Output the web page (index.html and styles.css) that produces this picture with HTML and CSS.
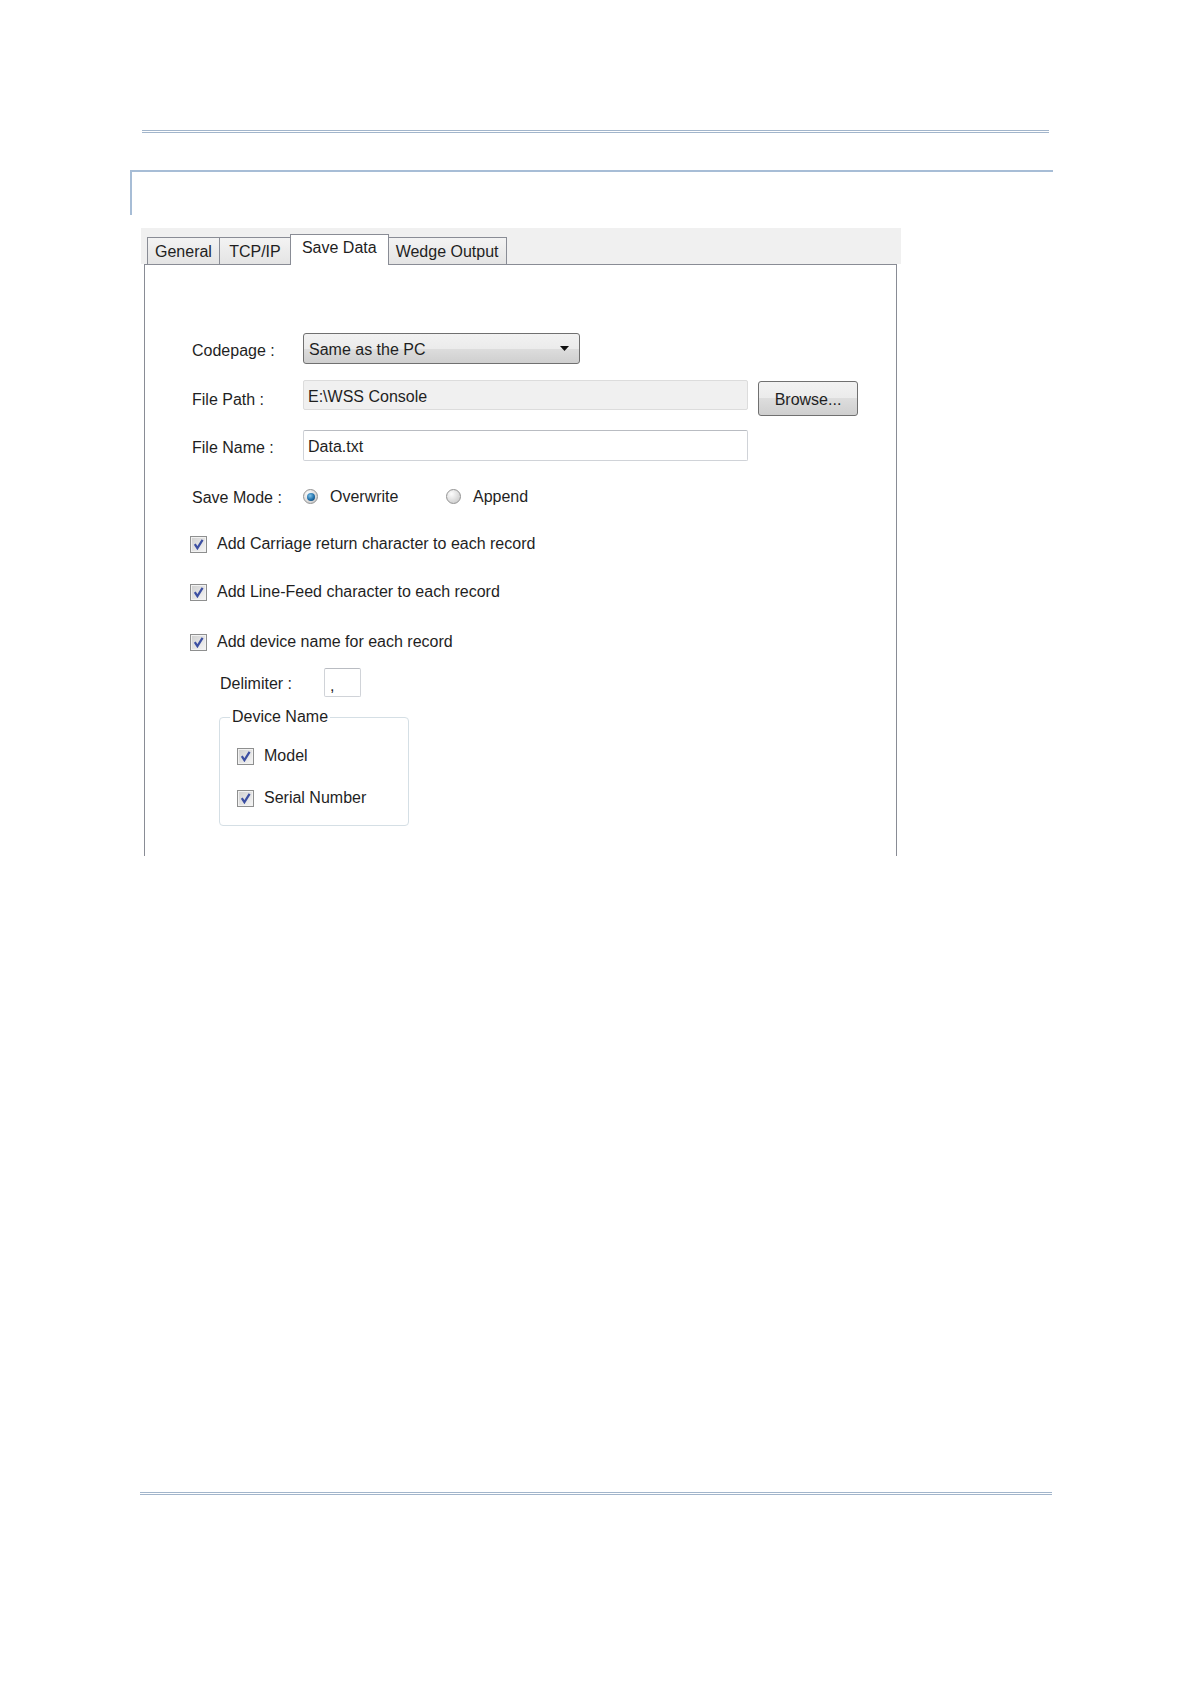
FILE: index.html
```html
<!DOCTYPE html>
<html>
    <head>
        <title>Save Data settings</title>
        <link rel="stylesheet" href="styles.css">
    </head>
    <body>
        <div class="rule rule-top"></div>
        <div class="heading-box"></div>

        <div class="shot">
            <div class="tabbar">
                <div class="tab">General</div>
                <div class="tab">TCP/IP</div>
                <div class="tab tab-active">Save Data</div>
                <div class="tab">Wedge Output</div>
            </div>
            <div class="panel">
                <div class="row row-codepage">
                    <span class="label">Codepage :</span>
                    <div class="select">
                        <span class="select-text">Same as the PC</span>
                        <svg class="arrow" width="9" height="5" viewBox="0 0 9 5"><path d="M0 0 H9 L4.5 5 Z" fill="#111"/></svg>
                    </div>
                </div>
                <div class="row row-path">
                    <span class="label label-tall">File Path :</span>
                    <div class="field field-disabled">E:\WSS Console</div>
                    <div class="button">Browse...</div>
                </div>
                <div class="row row-name">
                    <span class="label">File Name :</span>
                    <div class="field">Data.txt</div>
                </div>
                <div class="row row-mode">
                    <span class="label label-mode">Save Mode :</span>
                    <span class="option"><span class="radio radio-on"><span class="dot"></span></span>Overwrite</span>
                    <span class="option"><span class="radio"></span>Append</span>
                </div>
                <div class="row row-check">
                    <span class="box"><svg width="11" height="11" viewBox="0 0 11 11"><path d="M1.8 5.2 L4.4 9.2 L9.6 0.8" fill="none" stroke="#3c4fa2" stroke-width="2.2"/></svg></span>
                    Add Carriage return character to each record
                </div>
                <div class="row row-check">
                    <span class="box"><svg width="11" height="11" viewBox="0 0 11 11"><path d="M1.8 5.2 L4.4 9.2 L9.6 0.8" fill="none" stroke="#3c4fa2" stroke-width="2.2"/></svg></span>
                    Add Line-Feed character to each record
                </div>
                <div class="row row-check row-check-last">
                    <span class="box"><svg width="11" height="11" viewBox="0 0 11 11"><path d="M1.8 5.2 L4.4 9.2 L9.6 0.8" fill="none" stroke="#3c4fa2" stroke-width="2.2"/></svg></span>
                    Add device name for each record
                </div>
                <div class="row row-delim">
                    <span class="label label-delim">Delimiter :</span>
                    <div class="field field-small">,</div>
                </div>
                <fieldset class="group">
                    <legend>Device Name</legend>
                    <div class="row group-row">
                        <span class="box"><svg width="11" height="11" viewBox="0 0 11 11"><path d="M1.8 5.2 L4.4 9.2 L9.6 0.8" fill="none" stroke="#3c4fa2" stroke-width="2.2"/></svg></span>
                        Model
                    </div>
                    <div class="row group-row">
                        <span class="box"><svg width="11" height="11" viewBox="0 0 11 11"><path d="M1.8 5.2 L4.4 9.2 L9.6 0.8" fill="none" stroke="#3c4fa2" stroke-width="2.2"/></svg></span>
                        Serial Number
                    </div>
                </fieldset>
            </div>
        </div>

        <div class="rule rule-bottom"></div>
    </body>
</html>
```

FILE: styles.css
```css
body {
    margin: 0;
    background: #fff;
    font-family: "Liberation Sans", Arial, sans-serif;
    font-size: 16px;
    color: #1f1f1f;
}
.rule {
    height: 1px;
    border-top: 1px solid #a2b5cb;
    border-bottom: 1px solid #a2b5cb;
}
.rule-top {
    margin: 130px 0 0 142px;
    width: 907px;
}
.rule-bottom {
    margin: 636px 0 0 140px;
    width: 912px;
}
.heading-box {
    margin: 37px 0 0 130px;
    width: 921px;
    height: 43px;
    border-top: 2px solid #a7bdd6;
    border-left: 2px solid #a7bdd6;
}

/* the dialog screenshot */
.shot {
    margin: 13px 0 0 141px;
    width: 760px;
}
.tabbar {
    height: 36px;
    background: #f0f0f0;
    padding-left: 6px;
    display: flex;
    align-items: flex-end;
}
.tab {
    height: 27px;
    min-width: 72px;
    box-sizing: border-box;
    padding: 2px 7px 0;
    border: 1px solid #898c95;
    border-bottom: none;
    margin-right: -1px;
    background: linear-gradient(#f3f3f3, #e4e4e4);
    display: flex;
    align-items: center;
    justify-content: center;
}
.tab-active {
    height: 31px;
    padding: 0 11px 4px;
    background: #fff;
    margin-bottom: -1px;
    position: relative;
    z-index: 1;
}
.panel {
    margin: 0 4px 0 3px;
    height: 592px;
    box-sizing: border-box;
    border: 1px solid #898c95;
    border-bottom: none;
    background: #fff;
    padding-left: 47px;
    padding-top: 68px;
}
.row {
    display: flex;
    align-items: center;
}
.label {
    width: 111px;
    flex-shrink: 0;
    padding-top: 5px;
}
.row-codepage {
    height: 31px;
}
.select {
    width: 277px;
    height: 31px;
    box-sizing: border-box;
    border: 1px solid #707070;
    border-radius: 3px;
    background: linear-gradient(#f2f2f2, #ebebeb 50%, #dddddd 50%, #cfcfcf);
    display: flex;
    align-items: center;
    justify-content: space-between;
    padding: 0 10px 0 5px;
}
.select-text {
    padding-top: 3px;
}
.row-path {
    margin-top: 16px;
    height: 36px;
    align-items: flex-start;
}
.label-tall {
    line-height: 32px;
    padding-top: 4px;
}
.field {
    width: 445px;
    height: 31px;
    box-sizing: border-box;
    border: 1px solid #d0d3d8;
    border-top-color: #b9bcc2;
    border-radius: 2px;
    padding: 3px 0 0 4px;
    display: flex;
    align-items: center;
}
.field-disabled {
    height: 30px;
    background: #f0f0f0;
    border-color: #dcdcdc;
}
.button {
    margin: 1px 0 0 10px;
    width: 100px;
    height: 35px;
    box-sizing: border-box;
    border: 1px solid #707070;
    border-radius: 3px;
    background: linear-gradient(#f2f2f2, #ebebeb 50%, #dddddd 50%, #cfcfcf);
    display: flex;
    align-items: center;
    justify-content: center;
    padding-top: 2px;
}
.row-name {
    margin-top: 14px;
    height: 31px;
}
.row-mode {
    margin-top: 23px;
    height: 24px;
}
.label-mode {
    padding-top: 3px;
}
.option {
    display: flex;
    align-items: center;
    gap: 12px;
    width: 143px;
    padding-top: 1px;
}
.radio {
    width: 15px;
    height: 15px;
    box-sizing: border-box;
    border-radius: 50%;
    border: 1px solid #939393;
    background: radial-gradient(circle at 35% 30%, #fdfdfd, #d4d4d4 70%, #c2c2c2);
    display: flex;
    align-items: center;
    justify-content: center;
}
.dot {
    width: 8px;
    height: 8px;
    border-radius: 50%;
    background: radial-gradient(circle at 40% 35%, #7fc3ea, #1f6ea8 55%, #12395c);
}
.row-check {
    margin: 24px 0 0 -2px;
    height: 24px;
    gap: 10px;
}
.row-check-last {
    margin-top: 26px;
}
.box {
    width: 17px;
    height: 17px;
    box-sizing: border-box;
    border: 1px solid #8e8f8f;
    background: linear-gradient(135deg, #cfcfcf, #f6f6f6);
    box-shadow: inset 0 0 0 1px #f2f2f2;
    display: flex;
    align-items: center;
    justify-content: center;
}
.row-delim {
    margin: 14px 0 0 28px;
    height: 29px;
}
.label-delim {
    width: 104px;
    padding-top: 2px;
}
.field-small {
    width: 37px;
    height: 29px;
    padding: 6px 0 0 5px;
}
.group {
    margin: 11px 0 0 27px;
    width: 190px;
    box-sizing: border-box;
    border: 1px solid #d5dfe5;
    border-radius: 4px;
    padding: 18px 0 15px 17px;
}
.group legend {
    margin-left: -7px;
    padding: 0 2px;
    line-height: 18px;
}
.group-row {
    height: 24px;
    gap: 10px;
}
.group-row + .group-row {
    margin-top: 18px;
}
```
